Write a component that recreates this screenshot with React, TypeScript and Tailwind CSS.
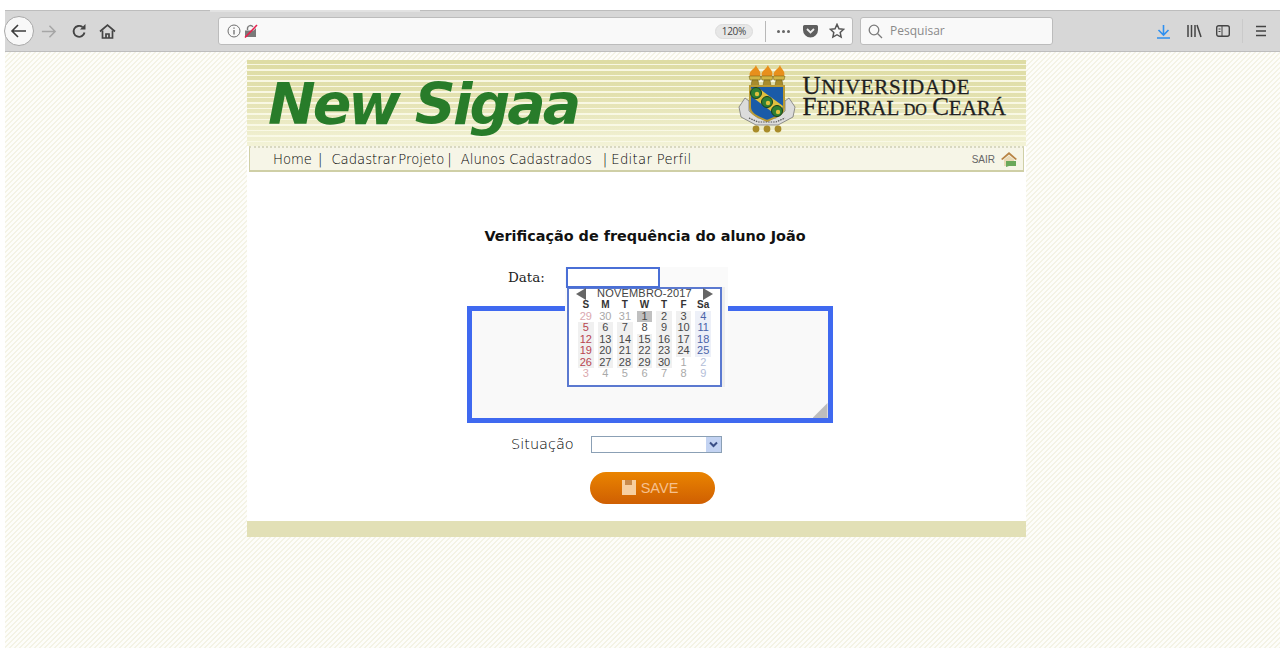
import React from "react";

const hatch = "bg-[linear-gradient(135deg,#f4f3e5_20%,#fdfdfa_20%,#fdfdfa_50%,#f4f3e5_50%,#f4f3e5_70%,#fdfdfa_70%)] bg-[length:5px_5px]";
const stripes = "bg-[linear-gradient(180deg,rgba(250,250,232,0)_0%,rgba(250,250,232,0.15)_40%,rgba(250,250,232,0.75)_100%),repeating-linear-gradient(180deg,#dedca4_0px,#dedca4_4px,#f8f7e2_4px,#f8f7e2_5.5px)]";

type Cell = { t: string; c: string; b?: string };
const rd = "text-[#b8444f]", rl = "text-[#dba8ae]", k = "text-[#484848]", g = "text-[#a9a9a9]", bl = "text-[#4a63a8]", bll = "text-[#b3bdd8]";
const shade = "bg-[#f0f0f0]";
const wk = "bg-[#edf0f8]";
const rows: Cell[][] = [
  [{ t: "29", c: rl }, { t: "30", c: g }, { t: "31", c: g }, { t: "1", c: k, b: "bg-[#c0c0c0]" }, { t: "2", c: k, b: shade }, { t: "3", c: k, b: shade }, { t: "4", c: bl, b: wk }],
  [{ t: "5", c: rd, b: shade }, { t: "6", c: k, b: shade }, { t: "7", c: k, b: shade }, { t: "8", c: k }, { t: "9", c: k, b: shade }, { t: "10", c: k, b: shade }, { t: "11", c: bl, b: wk }],
  [{ t: "12", c: rd, b: shade }, { t: "13", c: k, b: shade }, { t: "14", c: k, b: shade }, { t: "15", c: k, b: shade }, { t: "16", c: k, b: shade }, { t: "17", c: k, b: shade }, { t: "18", c: bl, b: wk }],
  [{ t: "19", c: rd, b: shade }, { t: "20", c: k, b: shade }, { t: "21", c: k, b: shade }, { t: "22", c: k, b: shade }, { t: "23", c: k, b: shade }, { t: "24", c: k, b: shade }, { t: "25", c: bl, b: wk }],
  [{ t: "26", c: rd, b: shade }, { t: "27", c: k, b: shade }, { t: "28", c: k, b: shade }, { t: "29", c: k, b: shade }, { t: "30", c: k, b: shade }, { t: "1", c: g }, { t: "2", c: bll }],
  [{ t: "3", c: rl }, { t: "4", c: g }, { t: "5", c: g }, { t: "6", c: g }, { t: "7", c: g }, { t: "8", c: g }, { t: "9", c: bll }],
];

function Crest() {
  return (
    <svg width="58" height="68" viewBox="0 0 58 68">
      {[17, 29, 41].map((x) => (
        <g key={x}>
          <path d={`M${x - 5} 11 C${x - 7} 6 ${x - 1} 5 ${x + 1} 0 C${x + 2} 4 ${x + 7} 6 ${x + 5} 11 Z`} fill="#e88f1c" />
          <path d={`M${x - 6} 11 H${x + 6} L${x + 5} 15 H${x - 5} Z`} fill="#d2b544" stroke="#6b5a16" strokeWidth="0.5" />
          <path d={`M${x - 3} 15 H${x + 3} L${x + 4} 21 H${x - 4} Z`} fill="#a88c2c" stroke="#6b5a16" strokeWidth="0.5" />
        </g>
      ))}
      <path d="M1 42 L7 33 L11 36 L11 46 L20 53 L38 53 L47 46 L47 36 L51 33 L57 42 L55 52 L40 60 L18 60 L3 52 Z" fill="#dcdcdc" stroke="#777" strokeWidth="0.8" />
      <path d="M12 21 H46 V42 C46 50 37 52 29 56 C21 52 12 50 12 42 Z" fill="#1a5ba8" stroke="#b99a35" strokeWidth="2" />
      <path d="M13 24 L19 22 L45 41 L43 47 L38 50 L13 31 Z" fill="#dfc03e" />
      {[[18, 28], [29, 37], [39, 46]].map(([x, y]) => (
        <g key={x}>
          <circle cx={x} cy={y} r="5.5" fill="#2e7f34" stroke="#173f1a" strokeWidth="1" />
          <circle cx={x + 1} cy={y + 1} r="2.2" fill="#dfc03e" />
        </g>
      ))}
      <path d="M11 53 L20 57 L38 57 L47 53" fill="none" stroke="#555" strokeWidth="1.2" strokeDasharray="1.5 1" />
      {[18, 29, 40].map((x) => (
        <circle key={x} cx={x} cy={64} r="3.4" fill="#a98c2a" />
      ))}
    </svg>
  );
}

export default function App() {
  return (
    <div className="h-[658px] w-[1280px] overflow-hidden bg-white pt-[10px] font-['Open_Sans',sans-serif]">
      {/* Browser toolbar */}
      <div className="relative ml-[5px] flex h-[42px] items-center border-y border-[#bdbdbd] bg-[#d7d7d7] pr-[8px]">
        <div className="absolute -top-px left-[205px] h-[2px] w-[210px] bg-[#e2e2e2]" />
        <div className="absolute -left-[1px] top-[5px] flex h-[30px] w-[30px] items-center justify-center rounded-full border border-[#a8a8a8] bg-[#f8f8f8]">
          <svg width="18" height="18" viewBox="0 0 18 18" fill="none" stroke="#3c3c3c" strokeWidth="1.6"><path d="M16 9H2M8 3L2 9l6 6" /></svg>
        </div>
        <svg className="ml-[35px]" width="17" height="17" viewBox="0 0 18 18" fill="none" stroke="#a6a6a6" strokeWidth="1.6"><path d="M2 9h14M10 3l6 6-6 6" /></svg>
        <svg className="ml-[14px]" width="16" height="16" viewBox="0 0 16 16" fill="none" stroke="#444" strokeWidth="1.9"><path d="M13.5 9.5A5.5 5.5 0 1 1 11.5 4" /><path d="M14.5 1v5.5H9Z" fill="#444" stroke="none" /></svg>
        <svg className="ml-[12px]" width="17" height="17" viewBox="0 0 17 17" fill="none" stroke="#444" strokeWidth="1.7"><path d="M1 8.5L8.5 2 16 8.5" /><path d="M3.5 7.5V15h10V7.5" /><path d="M7 15v-4h3v4" /></svg>

        <div className="ml-[102px] flex h-[28px] w-[635px] shrink-0 items-center rounded-[3px] border border-[#bcbcbc] bg-[#f9f9f9] pl-[8px] pr-[7px]">
          <svg width="14" height="14" viewBox="0 0 14 14" fill="none" stroke="#6e6e6e" strokeWidth="1"><circle cx="7" cy="7" r="6" /><path d="M7 6v4.4M7 3.4v1.4" strokeWidth="1.3" /></svg>
          <svg className="ml-[3px]" width="14" height="14" viewBox="0 0 14 14"><path d="M1 13V6.5h8.5L12 4v9Z" fill="#7a7a7a" /><path d="M3.5 6V4a3 3 0 0 1 5.5-1" fill="none" stroke="#7a7a7a" strokeWidth="1.4" /><path d="M1 13.5L13 1" stroke="#e8214e" strokeWidth="1.6" /></svg>
          <div className="flex-1" />
          <span className="rounded-full border border-[#dcdcdc] bg-[#e7e7e7] px-[6px] text-[10px] leading-[13px] text-[#444] tracking-[-0.3px]">120%</span>
          <div className="ml-[12px] h-[21px] w-px bg-[#b8b8b8]" />
          <span className="ml-[11px] flex gap-[2px]">
            <i className="h-[3px] w-[3px] rounded-full bg-[#666]" /><i className="h-[3px] w-[3px] rounded-full bg-[#666]" /><i className="h-[3px] w-[3px] rounded-full bg-[#666]" />
          </span>
          <svg className="ml-[13px]" width="15" height="14" viewBox="0 0 15 14"><path d="M1.5 1h12A1.5 1.5 0 0 1 15 2.5V6A7.5 7.5 0 0 1 0 6V2.5A1.5 1.5 0 0 1 1.5 1Z" fill="#5f5f5f" /><path d="M4 5l3.5 3.5L11 5" fill="none" stroke="#eee" strokeWidth="1.8" /></svg>
          <svg className="ml-[11px]" width="16" height="16" viewBox="0 0 24 24" fill="none" stroke="#555" strokeWidth="2.2"><path d="M12 2l3 6.6 7 .8-5.2 4.8 1.4 7L12 17.6 5.8 21.2l1.4-7L2 9.4l7-.8Z" /></svg>
        </div>

        <div className="ml-[7px] flex h-[28px] w-[193px] shrink-0 items-center rounded-[3px] border border-[#bcbcbc] bg-[#f9f9f9] pl-[7px]">
          <svg width="15" height="15" viewBox="0 0 15 15" fill="none" stroke="#7a7a7a" strokeWidth="1.3"><circle cx="6" cy="6" r="4.8" /><path d="M9.5 9.5L14 14" /></svg>
          <span className="ml-[7px] text-[12px] text-[#8a8a8a]">Pesquisar</span>
        </div>

        <svg className="ml-[104px]" width="13" height="15" viewBox="0 0 13 15" fill="none" stroke="#2e90f0" strokeWidth="1.6"><path d="M6.5 1v9M1.5 6l5 5 5-5M0 14h13" /></svg>
        <svg className="ml-[17px]" width="15" height="14" viewBox="0 0 15 14" fill="none" stroke="#444" strokeWidth="1.5"><path d="M1 1v12M4.5 1v12M8 1v12M10 1l4 12" /></svg>
        <svg className="ml-[14px]" width="14" height="14" viewBox="0 0 14 14" fill="none" stroke="#444" strokeWidth="1.4"><rect x="0.7" y="1.7" width="12.6" height="10.6" rx="2" /><path d="M6 2v10M2.5 5H4.5M2.5 7.5H4.5" strokeWidth="1" /></svg>
        <div className="ml-[12px] h-[24px] w-px bg-[#cacaca]" />
        <svg className="ml-[12px]" width="12" height="12" viewBox="0 0 12 12" stroke="#444" strokeWidth="1.5"><path d="M1 1.5h10M1 6h10M1 10.5h10" /></svg>
      </div>

      {/* Page */}
      <div className={`ml-[5px] h-[596px] pt-[8px] ${hatch}`}>
        <div className="ml-[242px] flex h-[477px] w-[779px] flex-col bg-white">
          {/* Banner */}
          <div className={`relative flex h-[86px] shrink-0 items-start ${stripes}`}>
            <span className="ml-[21px] mt-[8px] text-[57px] font-bold italic leading-[72px] tracking-[-3px] text-[#287c2a] font-['DejaVu_Sans',sans-serif] whitespace-nowrap">New Sigaa</span>
            <div className="ml-auto flex items-start">
              <div className="mt-[5px]"><Crest /></div>
              <div className="ml-[7px] mr-[20px] mt-[16px] text-[#1f1f1f] font-['Liberation_Serif',serif] text-[21px] leading-[20px] uppercase whitespace-nowrap [-webkit-text-stroke:0.3px_#1f1f1f]">
                <div className="tracking-[0.7px]"><span className="text-[25px]">U</span>niversidade</div>
                <div><span className="text-[25px]">F</span>ederal <span className="text-[16px]">do</span> <span className="text-[25px]">C</span>eará</div>
              </div>
            </div>
          </div>
          {/* Nav */}
          <div className="mx-[2px] flex h-[26px] shrink-0 items-center border-x border-b-2 border-t-2 border-[#cfcfa6] [border-top-style:dotted] border-t-[#d8d8c0] bg-[#f6f5e7] pl-[23px] pr-[5px] text-[13.2px] text-black font-['DejaVu_Sans',sans-serif] font-light whitespace-nowrap">
            <span className="pt-[2px]">Home</span>
            <span className="ml-[6px] pt-[2px]">|</span>
            <span className="ml-[9px] pt-[2px] [word-spacing:-2px]">Cadastrar Projeto</span>
            <span className="ml-[3px] pt-[2px]">|</span>
            <span className="ml-[9px] pt-[2px]">Alunos Cadastrados</span>
            <span className="ml-[11px] pt-[2px]">|</span>
            <span className="ml-[4px] pt-[2px] tracking-[0.3px]">Editar Perfil</span>
            <span className="ml-auto text-[10px] text-[#666] font-['Liberation_Sans',sans-serif] font-normal">SAIR</span>
            <svg className="ml-[5px]" width="18" height="18" viewBox="0 0 18 18"><path d="M1 9L9 2l8 7-1.5 1L9 4.5 2.5 10Z" fill="#b88445" /><path d="M4 9.5L9 5.5l5 4V16H4Z" fill="#e9d9b5" /><path d="M6 11h10v5H9l-3 1Z" fill="#6aa85a" /></svg>
          </div>

          {/* Body */}
          <div className="relative flex flex-1 flex-col items-center">
            <h1 className="mt-[53px] ml-[17px] text-[14.4px] font-bold leading-[22px] text-[#111] font-['DejaVu_Sans',sans-serif]">Verificação de frequência do aluno João</h1>

            <div className="mt-[20px] flex h-[21px] items-center self-start">
              <span className="ml-[261px] w-[58px] text-[13.5px] text-[#222] font-['DejaVu_Serif',serif]">Data:</span>
            </div>

            <div className="relative mt-[18px] ml-[26px] h-[117px] w-[366px] border-[5px] border-[#3f69f0] bg-[#f9f9f9]">
              <div className="absolute bottom-0 right-0 h-[15px] w-[15px] bg-[#bdbdbd] [clip-path:polygon(100%_0,100%_100%,0_100%)]" />
            </div>

            <div className="mt-[11px] flex items-center self-start">
              <span className="ml-[264px] w-[80px] text-[14.5px] text-black font-['DejaVu_Sans',sans-serif] font-light">Situação</span>
              <div className="flex h-[17px] w-[131px] items-center justify-end border border-[#8ba0b5] bg-white">
                <div className="flex h-[15px] w-[15px] items-center justify-center bg-[#c3d3f2]">
                  <svg width="9" height="7" viewBox="0 0 9 7" fill="none" stroke="#3b4f86" strokeWidth="2"><path d="M1 1.5l3.5 3.5L8 1.5" /></svg>
                </div>
              </div>
            </div>

            <div className="mt-[16px] ml-[31px] flex h-[32px] w-[125px] items-center justify-center rounded-full bg-gradient-to-b from-[#ea8400] to-[#cf5f02] pr-[4px]">
              <svg width="14" height="15" viewBox="0 0 14 15"><path d="M0 0h14v15H0Z" fill="#f7cfa0" /><path d="M3 0h7v5H3Z" fill="#c98a4a" /></svg>
              <span className="ml-[5px] text-[14.5px] leading-[20px] text-[#f6c08e] font-['Liberation_Sans',sans-serif]">SAVE</span>
            </div>

            {/* Date input with its open calendar popup */}
            <div className="absolute left-[318px] top-[95px] h-[121px] w-[163px] bg-[#fafafa]">
              <div className="relative ml-px h-[21px] w-[94px] border-2 border-[#4a6fd6] bg-white" />
              <div className="-mt-px h-[100px] w-[160px] bg-[linear-gradient(90deg,transparent_0,transparent_156px,#eeeeee_156px)] pl-[1px]">
                <div className="ml-px h-[100px] w-[155px] border-2 border-[#5b79d0] bg-white px-[7px] font-['Liberation_Sans',sans-serif] text-[11px] leading-[11.5px]">
                  <div className="flex h-[9px] items-center justify-between">
                    <i className="h-0 w-0 border-y-[6px] border-r-[10px] border-y-transparent border-r-[#666]" />
                    <span className="text-[#444] tracking-[0.2px]">NOVEMBRO-2017</span>
                    <i className="h-0 w-0 border-y-[6px] border-l-[10px] border-y-transparent border-l-[#666]" />
                  </div>
                  <div className="grid grid-cols-7 pt-px text-center">
                    {["S", "M", "T", "W", "T", "F", "Sa"].map((d, i) => (
                      <span key={i} className="text-[10px] font-bold text-[#333]">{d}</span>
                    ))}
                    {rows.flat().map((c, i) => (
                      <span key={i} className={`mx-[2px] ${c.c} ${c.b ?? ""}`}>{c.t}</span>
                    ))}
                  </div>
                </div>
              </div>
            </div>
          </div>

          {/* Footer */}
          <div className="h-[16px] shrink-0 bg-[#e2e0b6]" />
        </div>
      </div>
    </div>
  );
}
